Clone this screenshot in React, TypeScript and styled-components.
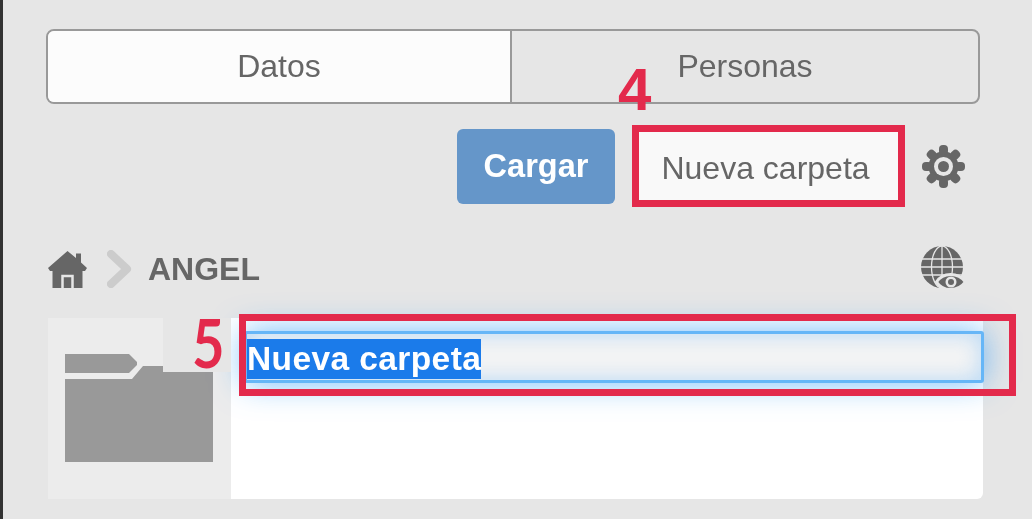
import styled, { createGlobalStyle } from "styled-components";

const GlobalStyle = createGlobalStyle`
  * {
    box-sizing: border-box;
  }

  html, body {
    margin: 0;
    background: #e6e6e6;
  }
`;

function GearIcon() {
  const teeth = [0, 45, 90, 135, 180, 225, 270, 315];

  return (
    <svg width="45" height="45" viewBox="0 0 45 45">
      <circle cx="22.5" cy="22.5" r="15" fill="#666" />
      {teeth.map((angle) => (
        <rect
          key={angle}
          x="18"
          y="1"
          width="9"
          height="10"
          rx="4"
          fill="#666"
          transform={`rotate(${angle} 22.5 22.5)`}
        />
      ))}
      <circle cx="22.5" cy="22.5" r="9.5" fill="#e6e6e6" />
      <circle cx="22.5" cy="22.5" r="5.5" fill="#666" />
    </svg>
  );
}

function HomeIcon() {
  return (
    <svg width="39" height="37" viewBox="0 0 39 37">
      <path
        fill="#666"
        d="M19.5 0 L28 7 V2.5 H33 V11.5 L39 17 L37 20 H34.5 V37 H4.5 V20 H2 L0 17 Z"
      />
      <path fill="none" stroke="#e6e6e6" strokeWidth="2.5" d="M14.5 37 V25 H24.5 V37" />
    </svg>
  );
}

function GlobeEyeIcon() {
  return (
    <svg width="46" height="46" viewBox="0 0 46 46">
      <circle cx="22" cy="21" r="21" fill="#666" />
      <g stroke="#e6e6e6" strokeWidth="1.3" fill="none">
        <path d="M1 13 H43 M1 21 H43 M1 29 H43" />
        <path d="M22 0 V42" />
        <ellipse cx="22" cy="21" rx="10.5" ry="21" />
      </g>
      <path
        fill="#666"
        stroke="#e6e6e6"
        strokeWidth="3"
        d="M16.5 36 C23 26 38 26 45.5 36 C38 46 23 46 16.5 36 Z"
      />
      <circle cx="31" cy="36" r="5.5" fill="#e6e6e6" />
      <circle cx="31" cy="36" r="3" fill="#666" />
    </svg>
  );
}

function FolderIcon() {
  return (
    <svg width="148" height="108" viewBox="0 0 148 108">
      <path fill="#999" d="M0 0 H64 L72 8 V11 L64 19 H0 Z" />
      <path fill="#999" d="M0 25 H67 L78 12 H148 V108 H0 Z" />
    </svg>
  );
}

export default function App() {
  return (
    <>
      <GlobalStyle />
      <Page>
        <Tabs>
          <Tab $active>Datos</Tab>
          <Tab>Personas</Tab>
        </Tabs>

        <Toolbar>
          <PrimaryButton>Cargar</PrimaryButton>
          <SecondaryButton>Nueva carpeta</SecondaryButton>
          <GearIcon />
        </Toolbar>

        <Breadcrumb>
          <HomeIcon />
          <Chevron viewBox="0 0 25 38" width="25" height="38">
            <path d="M4 4 L20 19 L4 34" />
          </Chevron>
          <Crumb>ANGEL</Crumb>
          <GlobeSlot>
            <GlobeEyeIcon />
          </GlobeSlot>
        </Breadcrumb>

        <FolderCard>
          <Thumb>
            <FolderIcon />
          </Thumb>
          <Details>
            <NameField>
              <Selected>Nueva carpeta</Selected>
            </NameField>
          </Details>
        </FolderCard>

        <StepNumberFour>4</StepNumberFour>
        <ButtonHighlight />
        <StepNumberFive>
          <FiveGlyph>5</FiveGlyph>
        </StepNumberFive>
        <FieldHighlight />
      </Page>
    </>
  );
}

const Page = styled.div`
  position: relative;
  width: 1032px;
  height: 519px;
  overflow: hidden;
  background: #e6e6e6;
  border-left: 3px solid #333;
  padding: 29px 0 0 43px;
  font-family: "Liberation Sans", Arial, sans-serif;
  color: #666;
  filter: blur(0.5px);
`;

const Tabs = styled.div`
  display: flex;
  width: 934px;
  height: 75px;
  border: 2px solid #999;
  border-radius: 8px;
  overflow: hidden;
`;

const Tab = styled.div<{ $active?: boolean }>`
  display: flex;
  align-items: center;
  justify-content: center;
  flex: ${(props) => (props.$active ? "0 0 464px" : "1")};
  font-size: 32px;
  background: ${(props) => (props.$active ? "#fcfcfc" : "transparent")};
  border-right: ${(props) => (props.$active ? "2px solid #999" : "none")};
`;

const Toolbar = styled.div`
  display: flex;
  align-items: center;
  justify-content: flex-end;
  gap: 21px;
  width: 934px;
  height: 75px;
  margin-top: 25px;
  padding-right: 14px;
`;

const PrimaryButton = styled.div`
  display: flex;
  align-items: center;
  justify-content: center;
  width: 158px;
  height: 75px;
  border-radius: 6px;
  background: #6596c9;
  color: #fff;
  font-size: 32.5px;
  font-weight: 700;
`;

const SecondaryButton = styled.div`
  display: flex;
  align-items: center;
  justify-content: center;
  width: 264px;
  height: 75px;
  padding: 4px 5px 0 0;
  background: #f9f9f9;
  font-size: 32px;
`;

const Breadcrumb = styled.div`
  display: flex;
  align-items: center;
  width: 934px;
  height: 44px;
  margin-top: 43px;
  padding: 0 14px 0 2px;
`;

const Chevron = styled.svg`
  margin: 0 16px 0 20px;

  path {
    fill: none;
    stroke: #ccc;
    stroke-width: 8;
    stroke-linecap: round;
    stroke-linejoin: round;
  }
`;

const Crumb = styled.span`
  font-size: 32px;
  font-weight: 700;
`;

const GlobeSlot = styled.div`
  display: flex;
  margin-left: auto;
`;

const FolderCard = styled.div`
  display: flex;
  width: 935px;
  height: 181px;
  margin: 27px 0 0 2px;
  border-radius: 0 0 6px 0;
  background: #fff;
`;

const Thumb = styled.div`
  flex: 0 0 183px;
  padding: 36px 0 0 17px;
  background: #ececec;
`;

const Details = styled.div`
  flex: 1;
  padding: 13px 0 0 13px;
`;

const NameField = styled.div`
  display: flex;
  align-items: center;
  width: 740px;
  height: 52px;
  padding: 3px 0 0 1px;
  border: 3px solid #66b6f7;
  border-radius: 3px;
  background: #f4f4f4;
  box-shadow: 0 0 32px rgba(70, 165, 250, 0.75), inset 0 0 22px rgba(90, 175, 250, 0.4);
`;

const Selected = styled.span`
  display: block;
  height: 40px;
  margin-left: -1px;
  line-height: 39px;
  background: #1b7bea;
  color: #fff;
  font-size: 33.5px;
  font-weight: 700;
  letter-spacing: 0.4px;
`;

const ButtonHighlight = styled.div`
  position: absolute;
  left: 629px;
  top: 125px;
  width: 273px;
  height: 82px;
  border: 7px solid #e32a4c;
`;

const FieldHighlight = styled.div`
  position: absolute;
  left: 236px;
  top: 314px;
  width: 777px;
  height: 82px;
  border: 7px solid #e32a4c;
`;

const StepNumberFour = styled.span`
  position: absolute;
  left: 615px;
  top: 55px;
  color: #e32a4c;
  font-size: 60px;
  font-weight: 700;
  line-height: 70px;
`;

const StepNumberFive = styled.div`
  position: absolute;
  left: 160px;
  top: 318px;
  width: 68px;
  height: 54px;
  padding-left: 29px;
  background: #e6e6e6;
`;

const FiveGlyph = styled.span`
  display: inline-block;
  color: #e32a4c;
  font-family: "Lato", sans-serif;
  font-size: 66px;
  font-weight: 700;
  line-height: 50px;
  transform: scaleX(0.85);
  transform-origin: left center;
`;
